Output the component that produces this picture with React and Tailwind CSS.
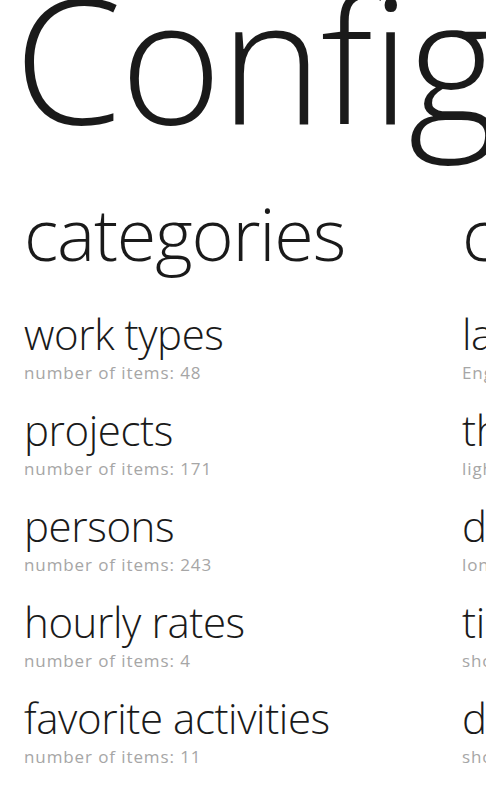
const CATEGORIES = [
  { title: 'work types', count: 48 },
  { title: 'projects', count: 171 },
  { title: 'persons', count: 243 },
  { title: 'hourly rates', count: 4 },
  { title: 'favorite activities', count: 11 },
]

const SETTINGS = [
  { title: 'language', value: 'English' },
  { title: 'theme', value: 'light' },
  { title: 'date format', value: 'long date' },
  { title: 'time format', value: 'short time' },
  { title: 'duration format', value: 'short' },
]

function Item({ title, sub }) {
  return (
    <div className="h-[96px] whitespace-nowrap">
      <p className="text-[42px] leading-[48px] font-light text-[#1a1a1a] tracking-[-0.4px]">{title}</p>
      <p className="text-[17px] leading-[20px] text-[#a6a6a6] tracking-[0.9px] mt-[5px]">{sub}</p>
    </div>
  )
}

export default function App() {
  return (
    <div
      className="w-[486px] h-[810px] overflow-hidden bg-white"
      style={{ fontFamily: '"Open Sans", "Noto Sans", sans-serif' }}
    >
      {/* Panorama title */}
      <h1 className="text-[174px] leading-[180px] font-light text-[#1a1a1a] whitespace-nowrap -mt-[33px] ml-[14px] tracking-[-2px]">
        Configuration
      </h1>

      {/* Panorama sections */}
      <div className="flex mt-[44px] pl-[24px]">
        <section className="w-[438px] shrink-0">
          <h2 className="text-[72px] leading-[84px] font-light text-[#1a1a1a] whitespace-nowrap tracking-[-1.2px]">categories</h2>
          <div className="mt-[35px]">
            {CATEGORIES.map(c => (
              <Item key={c.title} title={c.title} sub={`number of items: ${c.count}`} />
            ))}
          </div>
        </section>
        <section className="w-[438px] shrink-0">
          <h2 className="text-[72px] leading-[84px] font-light text-[#1a1a1a] whitespace-nowrap tracking-[-1.2px]">customize</h2>
          <div className="mt-[35px]">
            {SETTINGS.map(s => (
              <Item key={s.title} title={s.title} sub={s.value} />
            ))}
          </div>
        </section>
      </div>
    </div>
  )
}
